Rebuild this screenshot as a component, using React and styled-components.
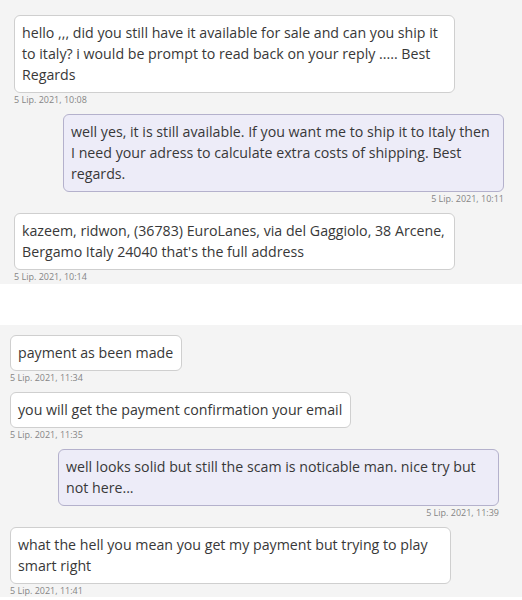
import React from "react";
import styled, { createGlobalStyle } from "styled-components";

const GlobalStyle = createGlobalStyle`
  html, body {
    margin: 0;
    padding: 0;
    background: #ffffff;
  }
  body {
    font-family: "Open Sans", "Noto Sans", sans-serif;
  }
`;

const first = [
  { id: 1, mine: false, time: "5 Lip. 2021, 10:08", text: "hello ,,, did you still have it available for sale and can you ship it to italy? i would be prompt to read back on your reply ..... Best Regards" },
  { id: 2, mine: true, time: "5 Lip. 2021, 10:11", text: "well yes, it is still available. If you want me to ship it to Italy then I need your adress to calculate extra costs of shipping. Best regards." },
  { id: 3, mine: false, time: "5 Lip. 2021, 10:14", text: "kazeem, ridwon, (36783) EuroLanes, via del Gaggiolo, 38 Arcene, Bergamo Italy 24040 that's the full address" },
];

const second = [
  { id: 4, mine: false, time: "5 Lip. 2021, 11:34", text: "payment as been made" },
  { id: 5, mine: false, time: "5 Lip. 2021, 11:35", text: "you will get the payment confirmation your email" },
  { id: 6, mine: true, time: "5 Lip. 2021, 11:39", text: "well looks solid but still the scam is noticable man. nice try but not here..." },
  { id: 7, mine: false, time: "5 Lip. 2021, 11:41", text: "what the hell you mean you get my payment but trying to play smart right" },
];

export default function App() {
  return (
    <Page>
      <GlobalStyle />
      <Panel $pad="15px 18px 1px 14px">
        {first.map((m) => (
          <Message key={m.id} m={m} />
        ))}
      </Panel>
      <Gap />
      <Panel $pad="10px 23px 0 10px">
        {second.map((m) => (
          <Message key={m.id} m={m} />
        ))}
      </Panel>
    </Page>
  );
}

function Message({ m }) {
  return (
    <Row $mine={m.mine}>
      <Bubble $mine={m.mine}>{m.text}</Bubble>
      <Stamp>{m.time}</Stamp>
    </Row>
  );
}

const Page = styled.div`
  width: 522px;
  height: 600px;
  display: flex;
  flex-direction: column;
  overflow: hidden;
`;

const Panel = styled.div`
  background: #f4f4f4;
  padding: ${(p) => p.$pad};
  display: flex;
  flex-direction: column;
  gap: 8px;
`;

const Gap = styled.div`
  height: 41px;
  flex-shrink: 0;
  background: #ffffff;
`;

const Row = styled.div`
  display: flex;
  flex-direction: column;
  align-items: ${(p) => (p.$mine ? "flex-end" : "flex-start")};
`;

const Bubble = styled.div`
  box-sizing: border-box;
  max-width: 441px;
  padding: 6px 8px 7px 7px;
  font-size: 14.2px;
  line-height: 21px;
  color: #383838;
  background: ${(p) => (p.$mine ? "#edecf8" : "#ffffff")};
  border: 1px solid ${(p) => (p.$mine ? "#b4b1cc" : "#cfcfcf")};
  border-radius: 6px;
`;

const Stamp = styled.div`
  font-size: 9px;
  line-height: 13px;
  color: #858585;
  white-space: nowrap;
`;
